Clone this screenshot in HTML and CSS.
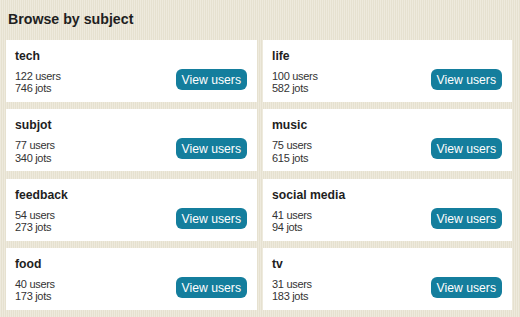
FILE: index.html
```html
<html lang="en">
<head>
  <meta charset="UTF-8">
  <title>Browse by subject</title>
  <link rel="stylesheet" href="styles.css">
</head>
<body>
  <div class="browse">
    <h1>Browse by subject</h1>
    <div class="subjects">
      <div class="subject">
        <div class="info">
          <h2>tech</h2>
          <div class="stat">122 users</div>
          <div class="stat">746 jots</div>
        </div>
        <a class="view-btn" href="#">View users</a>
      </div>
      <div class="subject">
        <div class="info">
          <h2>life</h2>
          <div class="stat">100 users</div>
          <div class="stat">582 jots</div>
        </div>
        <a class="view-btn" href="#">View users</a>
      </div>
      <div class="subject">
        <div class="info">
          <h2>subjot</h2>
          <div class="stat">77 users</div>
          <div class="stat">340 jots</div>
        </div>
        <a class="view-btn" href="#">View users</a>
      </div>
      <div class="subject">
        <div class="info">
          <h2>music</h2>
          <div class="stat">75 users</div>
          <div class="stat">615 jots</div>
        </div>
        <a class="view-btn" href="#">View users</a>
      </div>
      <div class="subject">
        <div class="info">
          <h2>feedback</h2>
          <div class="stat">54 users</div>
          <div class="stat">273 jots</div>
        </div>
        <a class="view-btn" href="#">View users</a>
      </div>
      <div class="subject">
        <div class="info">
          <h2>social media</h2>
          <div class="stat">41 users</div>
          <div class="stat">94 jots</div>
        </div>
        <a class="view-btn" href="#">View users</a>
      </div>
      <div class="subject">
        <div class="info">
          <h2>food</h2>
          <div class="stat">40 users</div>
          <div class="stat">173 jots</div>
        </div>
        <a class="view-btn" href="#">View users</a>
      </div>
      <div class="subject">
        <div class="info">
          <h2>tv</h2>
          <div class="stat">31 users</div>
          <div class="stat">183 jots</div>
        </div>
        <a class="view-btn" href="#">View users</a>
      </div>
    </div>
  </div>
</body>
</html>
```

FILE: styles.css
```css
* {
  box-sizing: border-box;
  margin: 0;
  padding: 0;
}

body {
  font-family: "Liberation Sans", Arial, sans-serif;
  background: repeating-linear-gradient(90deg, #eeeadd 0 1px, #e6e1d0 1px 2px);
  color: #222;
  min-height: 100vh;
}

.browse {
  padding: 11px 8px 0 6px;
}

.browse h1 {
  font-size: 14.2px;
  font-weight: bold;
  line-height: 16px;
  margin: 0 0 13px 2px;
  color: #1f1f1f;
}

.subjects {
  display: grid;
  grid-template-columns: 251px 249px;
  column-gap: 6px;
  row-gap: 7.33px;
}

.subject {
  height: 62px;
  background: #fff;
  padding: 9px 10px 0 9px;
  display: flex;
  justify-content: space-between;
  align-items: flex-start;
}

.subject h2 {
  font-size: 12.2px;
  font-weight: bold;
  line-height: 14px;
  margin-bottom: 7px;
  color: #1e1e1e;
}

.stat {
  font-size: 11px;
  letter-spacing: -0.3px;
  line-height: 12.3px;
  color: #333;
}

.view-btn {
  margin-top: 20px;
  display: block;
  height: 21px;
  line-height: 20px;
  padding: 1px 6px 0;
  background: #147e9d;
  color: #fff;
  font-size: 12.2px;
  text-decoration: none;
  border-radius: 6px;
}
```
